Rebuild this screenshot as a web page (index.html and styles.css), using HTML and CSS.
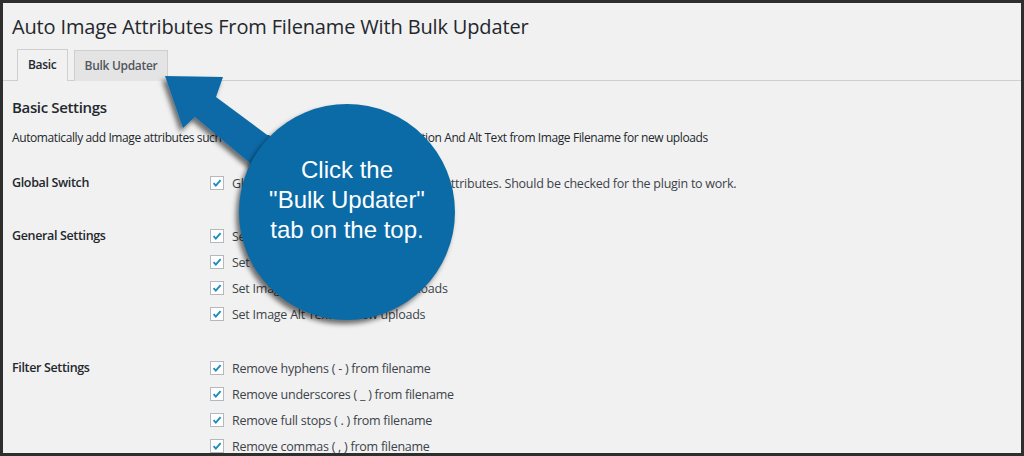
FILE: index.html
```html
<!DOCTYPE html>
<html lang="en">
<head>
<meta charset="utf-8">
<title>Auto Image Attributes From Filename With Bulk Updater</title>
<link rel="stylesheet" href="styles.css">
</head>
<body>
<div class="frame">
  <h1 class="title">Auto Image Attributes From Filename With Bulk Updater</h1>
  <nav class="tabs">
    <a class="tab tab-active">Basic</a>
    <a class="tab">Bulk Updater</a>
  </nav>
  <h2 class="section">Basic Settings</h2>
  <p class="desc">Automatically add Image attributes such as Image Title, Image Caption, Description And Alt Text from Image Filename for new uploads</p>

  <div class="form">
    <div class="row">
      <div class="label">Global Switch</div>
      <div class="fields">
        <label class="check"><span class="box"><svg viewBox="0 0 14 14"><path d="M3 7.2l2.6 2.8L11.2 3.6"/></svg></span>Global Switch. Check to enable Image Attributes. Should be checked for the plugin to work.</label>
      </div>
    </div>
    <div class="row">
      <div class="label">General Settings</div>
      <div class="fields">
        <label class="check"><span class="box"><svg viewBox="0 0 14 14"><path d="M3 7.2l2.6 2.8L11.2 3.6"/></svg></span>Set Image Title for new uploads</label>
        <label class="check"><span class="box"><svg viewBox="0 0 14 14"><path d="M3 7.2l2.6 2.8L11.2 3.6"/></svg></span>Set Image Caption for new uploads</label>
        <label class="check"><span class="box"><svg viewBox="0 0 14 14"><path d="M3 7.2l2.6 2.8L11.2 3.6"/></svg></span>Set Image Description for new uploads</label>
        <label class="check"><span class="box"><svg viewBox="0 0 14 14"><path d="M3 7.2l2.6 2.8L11.2 3.6"/></svg></span>Set Image Alt Text for new uploads</label>
      </div>
    </div>
    <div class="row">
      <div class="label">Filter Settings</div>
      <div class="fields">
        <label class="check"><span class="box"><svg viewBox="0 0 14 14"><path d="M3 7.2l2.6 2.8L11.2 3.6"/></svg></span>Remove hyphens ( - ) from filename</label>
        <label class="check"><span class="box"><svg viewBox="0 0 14 14"><path d="M3 7.2l2.6 2.8L11.2 3.6"/></svg></span>Remove underscores ( _ ) from filename</label>
        <label class="check"><span class="box"><svg viewBox="0 0 14 14"><path d="M3 7.2l2.6 2.8L11.2 3.6"/></svg></span>Remove full stops ( . ) from filename</label>
        <label class="check"><span class="box"><svg viewBox="0 0 14 14"><path d="M3 7.2l2.6 2.8L11.2 3.6"/></svg></span>Remove commas ( , ) from filename</label>
      </div>
    </div>
  </div>

  <svg class="arrow" viewBox="0 0 1024 456" width="1024" height="456">
    <defs>
      <filter id="sh" x="-20%" y="-20%" width="140%" height="140%">
        <feDropShadow dx="-3" dy="4" stdDeviation="2.5" flood-color="#000" flood-opacity="0.55"/>
      </filter>
    </defs>
    <polygon points="165,76 223,77 216,97 305,163 282,190 195,117 183,128" fill="#0b6ba7" filter="url(#sh)"/>
  </svg>
  <div class="bubble">
    <span>Click the</span>
    <span>"Bulk Updater"</span>
    <span>tab on the top.</span>
  </div>
</div>
</body>
</html>
```

FILE: styles.css
```css
html, body {
  margin: 0;
  padding: 0;
  background: #f1f1f1;
}

.frame {
  position: relative;
  box-sizing: border-box;
  width: 1024px;
  height: 456px;
  overflow: hidden;
  border: 3px solid #2e2e2e;
  background: #f1f1f1;
  padding: 9px 0 0 9px;
  font-family: "Open Sans", "Noto Sans", sans-serif;
  color: #23282d;
}

.title {
  margin: 0;
  font-weight: 400;
  font-size: 20px;
  letter-spacing: -0.15px;
  line-height: 30px;
  color: #23282d;
}

.tabs {
  display: flex;
  gap: 6px;
  margin: 8px 0 0 -9px;
  padding-left: 14px;
  border-bottom: 1px solid #cfcfcf;
  height: 31px;
  box-sizing: border-box;
  align-items: flex-end;
}

.tab {
  box-sizing: border-box;
  height: 31px;
  line-height: 29px;
  padding: 0 10px;
  border: 1px solid #cfcfcf;
  border-bottom: none;
  background: #e4e4e4;
  font-size: 12px;
  letter-spacing: -0.3px;
  font-weight: 600;
  color: #50575e;
  margin-bottom: -1px;
}

.tab-active {
  background: #f1f1f1;
  color: #23282d;
  height: 32px;
}

.section {
  margin: 14px 0 0;
  font-size: 15px;
  letter-spacing: -0.35px;
  line-height: 24px;
  font-weight: 600;
}

.desc {
  margin: 10px 0 0;
  font-size: 12px;
  letter-spacing: -0.4px;
  line-height: 18px;
}

.form {
  margin-top: 23px;
}

.row {
  display: flex;
  margin-bottom: 27px;
}

.row + .row {
  margin-bottom: 28px;
}

.label {
  width: 198px;
  flex: none;
  font-size: 12.5px;
  letter-spacing: -0.35px;
  font-weight: 600;
  line-height: 26px;
}

.fields {
  display: flex;
  flex-direction: column;
}

.check {
  display: flex;
  align-items: center;
  gap: 8px;
  height: 26px;
  font-size: 12.5px;
  letter-spacing: -0.25px;
  color: #3c434a;
}

.box {
  box-sizing: border-box;
  width: 14px;
  height: 14px;
  border: 1px solid #b4b9be;
  background: #fff;
  display: flex;
}

.box svg {
  width: 12px;
  height: 12px;
  fill: none;
  stroke: #1e8cbe;
  stroke-width: 2.2;
}

.arrow {
  position: absolute;
  left: -3px;
  top: -3px;
  pointer-events: none;
}

.bubble {
  position: absolute;
  left: 236px;
  top: 101px;
  width: 216px;
  height: 216px;
  border-radius: 50%;
  background: #0b6ba7;
  box-shadow: -3px 4px 5px rgba(0, 0, 0, 0.55);
  display: flex;
  flex-direction: column;
  align-items: center;
  justify-content: center;
  padding-bottom: 24px;
  box-sizing: border-box;
  color: #fff;
  font-family: "Liberation Sans", Arial, sans-serif;
  font-size: 24px;
  line-height: 30px;
}
```
